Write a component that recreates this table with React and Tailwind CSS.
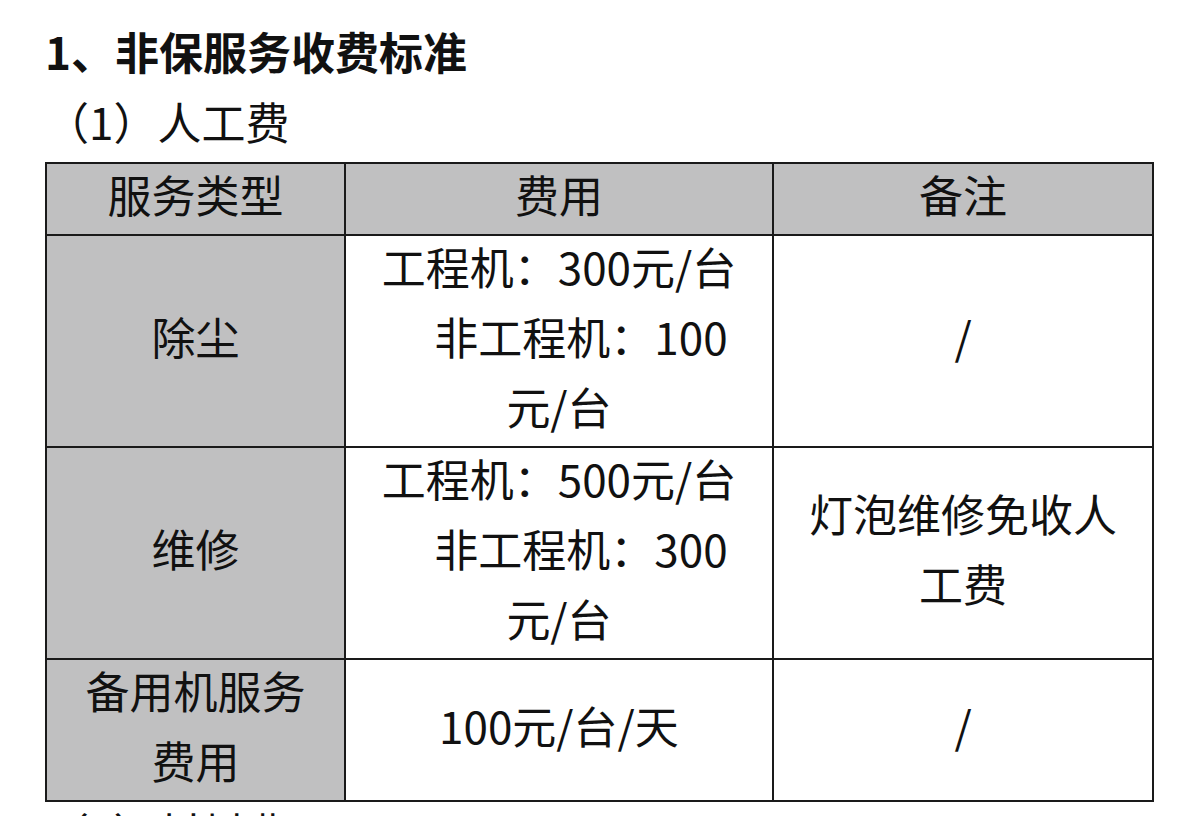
export default function App() {
  const font = { fontFamily: '"Noto Sans CJK SC", "Noto Sans", sans-serif' };
  const cell = "border-2 border-[#1a1a1a] p-0 text-center align-middle leading-[70px]";
  const Lines = ({ children }) => <div className="-translate-y-[5px]">{children}</div>;
  return (
    <div className="min-h-screen bg-white text-[#111] pl-[45px] pt-[16px]" style={font}>
      <h1 className="text-[44px] font-bold leading-[70px]">1、非保服务收费标准</h1>
      <p className="text-[44px] leading-[70px]">（1）人工费</p>

      <table className="mt-[6px] table-fixed border-collapse w-[1107px] text-[44px]">
        <colgroup>
          <col className="w-[299px]" />
          <col className="w-[428px]" />
          <col className="w-[380px]" />
        </colgroup>
        <thead>
          <tr className="bg-[#c0c0c1]">
            <th className={`${cell} font-normal`}><Lines>服务类型</Lines></th>
            <th className={`${cell} font-normal`}><Lines>费用</Lines></th>
            <th className={`${cell} font-normal`}><Lines>备注</Lines></th>
          </tr>
        </thead>
        <tbody>
          <tr>
            <td className={`${cell} bg-[#c0c0c1]`}><Lines>除尘</Lines></td>
            <td className={cell}>
              <Lines>
                <div className="whitespace-nowrap">工程机：300元/台</div>
                <div className="whitespace-nowrap pl-[44px]">非工程机：100</div>
                <div className="whitespace-nowrap">元/台</div>
              </Lines>
            </td>
            <td className={cell}><Lines>/</Lines></td>
          </tr>
          <tr>
            <td className={`${cell} bg-[#c0c0c1]`}><Lines>维修</Lines></td>
            <td className={cell}>
              <Lines>
                <div className="whitespace-nowrap">工程机：500元/台</div>
                <div className="whitespace-nowrap pl-[44px]">非工程机：300</div>
                <div className="whitespace-nowrap">元/台</div>
              </Lines>
            </td>
            <td className={cell}>
              <Lines>
                <div className="whitespace-nowrap">灯泡维修免收人</div>
                <div className="whitespace-nowrap">工费</div>
              </Lines>
            </td>
          </tr>
          <tr>
            <td className={`${cell} bg-[#c0c0c1]`}>
              <Lines>
                <div className="whitespace-nowrap">备用机服务</div>
                <div className="whitespace-nowrap">费用</div>
              </Lines>
            </td>
            <td className={cell}><Lines>100元/台/天</Lines></td>
            <td className={cell}><Lines>/</Lines></td>
          </tr>
        </tbody>
      </table>

      <p className="text-[44px] leading-[44px] mt-[8px]">（2）材料费</p>
    </div>
  );
}
